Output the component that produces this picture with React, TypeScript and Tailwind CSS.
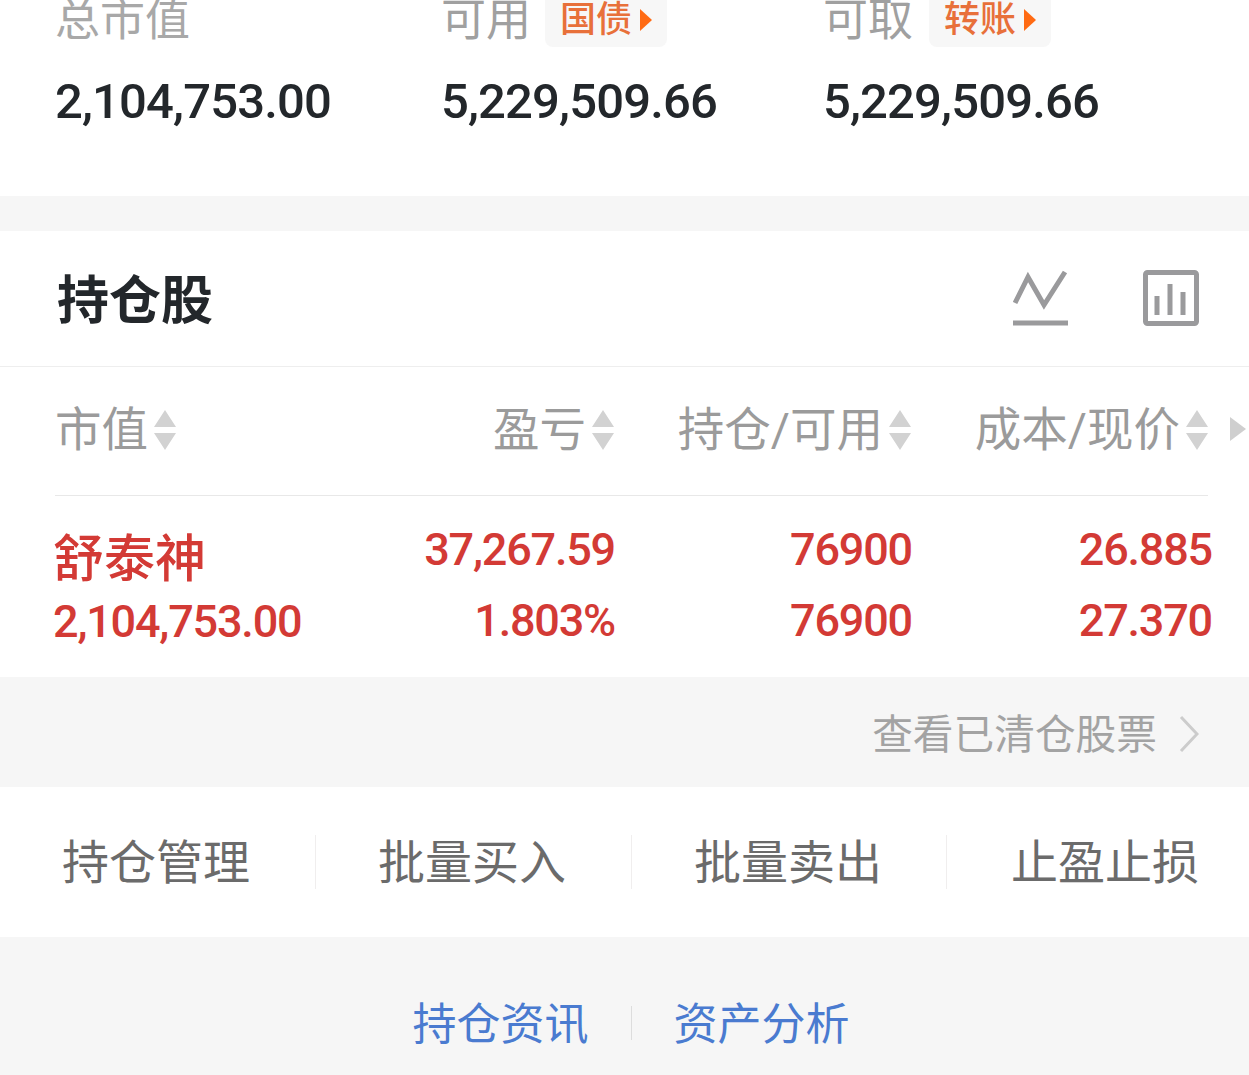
import React from "react";

const cjk = "font-['Roboto','Noto_Sans_CJK_SC',sans-serif]";
const bigNum = "font-['Roboto',sans-serif] font-medium tracking-[-0.85px]";
const num = "font-['Roboto',sans-serif] font-medium tracking-[-1.2px]";

const Sort = () => (
  <svg width="24" height="40" viewBox="0 0 24 40" className="shrink-0">
    <path d="M12 0 L23 17 H1 Z M1 23 H23 L12 40 Z" fill="#d2d2d2" />
  </svg>
);

const Tag = ({ label }: { label: string }) => (
  <div className="flex items-center h-[53px] w-[122px] pl-[15px] bg-[#f7f7f7] rounded-b-lg text-[36px] leading-none text-[#e8703a] -mt-[1px]">
    <span className="font-medium">{label}</span>
    <svg width="14" height="24" viewBox="0 0 14 24" className="ml-[7px]">
      <path d="M1 1 L13 12 L1 23 Z" fill="#ff6a13" />
    </svg>
  </div>
);

function Summary() {
  return (
    <div className={`h-[196px] bg-white flex pl-[55px] ${cjk}`}>
      <div className="w-[386px]">
        <div className="h-[47px] flex items-center text-[45px] leading-none text-[#a8a8a8] -mt-[3px]">总市值</div>
        <div className={`mt-[33px] text-[49px] leading-none text-[#23272b] ${bigNum}`}>2,104,753.00</div>
      </div>
      <div className="w-[382px]">
        <div className="h-[47px] flex items-center gap-[14px] -mt-[3px]">
          <span className="text-[45px] leading-none text-[#a0a0a0]">可用</span>
          <Tag label="国债" />
        </div>
        <div className={`mt-[33px] text-[49px] leading-none text-[#23272b] ${bigNum}`}>5,229,509.66</div>
      </div>
      <div>
        <div className="h-[47px] flex items-center gap-[16px] -mt-[3px]">
          <span className="text-[45px] leading-none text-[#a0a0a0]">可取</span>
          <Tag label="转账" />
        </div>
        <div className={`mt-[33px] text-[49px] leading-none text-[#23272b] ${bigNum}`}>5,229,509.66</div>
      </div>
    </div>
  );
}

function Title() {
  return (
    <div className="h-[136px] bg-white border-b border-[#eeeeee] flex items-center justify-between pl-[57px] pr-[50px]">
      <span className={`text-[52px] leading-none font-bold text-[#23272b] mt-[7px] ${cjk}`}>持仓股</span>
      <div className="flex items-center gap-[74px] -mt-[2px]">
        <svg width="56" height="56" viewBox="0 0 56 56" fill="none" stroke="#9a9a9c" strokeWidth="5">
          <path d="M2 33 L15 7 L31 35 L52 2" />
          <path d="M0 53 H55" />
        </svg>
        <svg width="56" height="56" viewBox="0 0 56 56" fill="none" stroke="#9a9a9c" strokeWidth="5">
          <rect x="2.5" y="2.5" width="51" height="51" rx="2" />
          <path d="M14 26 V45 M27 14 V45 M40 22 V45" />
        </svg>
      </div>
    </div>
  );
}

const Head = ({ label, left }: { label: string; left?: boolean }) => (
  <div className={`flex items-center gap-[5px] ${left ? "" : "justify-end"}`}>
    <span className="text-[46.5px] leading-none text-[#9b9b9b]">{label}</span>
    <Sort />
  </div>
);

const Cell = ({ top, bottom }: { top: string; bottom: string }) => (
  <div className={`text-right text-[45px] ${num}`}>
    <div className="h-[48px] leading-[48px]">{top}</div>
    <div className="mt-[23px] h-[48px] leading-[48px]">{bottom}</div>
  </div>
);

function Table() {
  return (
    <div className={`bg-white ${cjk}`}>
      <div className="relative h-[128px] flex items-center">
        <div className="grid grid-cols-[281px_279px_297px_297px] pl-[55px] -mt-[2px] w-full">
          <Head label="市值" left />
          <Head label="盈亏" />
          <Head label="持仓/可用" />
          <Head label="成本/现价" />
        </div>
        <svg width="16" height="24" viewBox="0 0 16 24" className="absolute right-[3px] top-[50px]">
          <path d="M0 0 L16 12 L0 24 Z" fill="#cfcfcf" />
        </svg>
      </div>
      <div className="ml-[55px] mr-[41px] h-[1px] bg-[#e8e8e8]" />
      <div className="h-[181px] grid grid-cols-[282px_280px_297px_300px] pl-[53px] pt-[30px] text-[#d33a35]">
        <div>
          <div className="mt-[5px] h-[58px] text-[51px] leading-[58px] font-medium">舒泰神</div>
          <div className={`mt-[9px] h-[48px] text-[45px] leading-[48px] ${num}`}>2,104,753.00</div>
        </div>
        <Cell top="37,267.59" bottom="1.803%" />
        <Cell top="76900" bottom="76900" />
        <Cell top="26.885" bottom="27.370" />
      </div>
    </div>
  );
}

function Cleared() {
  return (
    <div className={`h-[110px] bg-[#f6f6f6] flex items-center justify-end pr-[50px] gap-[22px] ${cjk}`}>
      <span className="text-[40.7px] leading-none text-[#a3a3a3] mt-[6px]">查看已清仓股票</span>
      <svg width="20" height="38" viewBox="0 0 20 38" fill="none" stroke="#cccccc" strokeWidth="3" className="mt-[4px]">
        <path d="M2 2 L18 19 L2 36" />
      </svg>
    </div>
  );
}

function Actions() {
  const items = ["持仓管理", "批量买入", "批量卖出", "止盈止损"];
  return (
    <div className={`h-[150px] bg-white grid grid-cols-[316px_316px_315px_302px] items-center ${cjk}`}>
      {items.map((t, i) => (
        <div
          key={t}
          className={`h-[54px] flex items-center text-[47px] leading-none text-[#6b6b6b] ${i < 3 ? "pl-[62px] border-r border-[#f0eeee]" : "pl-[64px]"}`}
        >
          {t}
        </div>
      ))}
    </div>
  );
}

function Links() {
  return (
    <div className={`h-[138px] bg-[#f6f6f6] flex items-start justify-center pl-[13px] pt-[64px] ${cjk}`}>
      <span className="text-[44px] leading-[48px] text-[#4a7bd0]">持仓资讯</span>
      <div className="w-[1px] h-[34px] bg-[#dddddd] mx-[42px] mt-[5px]" />
      <span className="text-[44px] leading-[48px] text-[#4a7bd0]">资产分析</span>
    </div>
  );
}

export default function App() {
  return (
    <div className="w-[1249px] h-[1075px] overflow-hidden bg-white">
      <Summary />
      <div className="h-[35px] bg-[#f6f6f6]" />
      <Title />
      <Table />
      <Cleared />
      <Actions />
      <Links />
    </div>
  );
}
